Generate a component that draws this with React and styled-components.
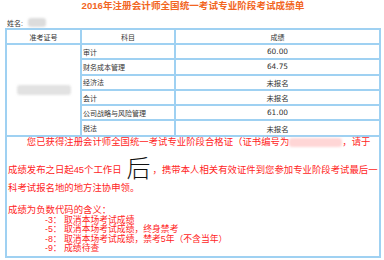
import React from "react";
import styled, { createGlobalStyle } from "styled-components";

const GlobalStyle = createGlobalStyle`
  body {
    margin: 0;
    background: #fff;
    font-family: "Liberation Sans", "Noto Sans CJK SC", sans-serif;
  }
`;

const Page = styled.div`
  width: 384px;
  height: 260px;
  overflow: hidden;
`;

const Title = styled.div`
  text-align: center;
  font-size: 9.6px;
  font-weight: 700;
  line-height: 11px;
  color: #f26522;
  padding-left: 2px;
`;

const NameRow = styled.div`
  display: flex;
  align-items: center;
  gap: 5px;
  height: 11px;
  margin-top: 6px;
  padding-left: 7px;
  font-size: 7px;
  color: #333;
`;

const Blur = styled.span`
  display: inline-block;
  width: ${(p) => p.$w}px;
  height: ${(p) => p.$h}px;
  background: ${(p) => p.$color || "#dcdcdc"};
  border-radius: 3px;
  filter: blur(1.2px);
  vertical-align: middle;
`;

const Grid = styled.div`
  margin-left: 5px;
  width: 376px;
  box-sizing: border-box;
  display: grid;
  grid-template-columns: 73px 92px 1fr;
  grid-template-rows: 13px repeat(6, 13.3px) 119px;
  gap: 2px;
  padding: 2px;
  background: #9fd1f2;
`;

const Cell = styled.div`
  background: #fff;
  display: flex;
  align-items: center;
  justify-content: ${(p) => p.$align || "flex-start"};
  padding: 0 1px;
  font-size: 7px;
  color: #333;
  white-space: nowrap;
  ${(p) => p.$span && `grid-row: span ${p.$span};`}
`;

const Score = styled(Cell)`
  font-family: "DejaVu Sans", "Noto Sans CJK SC", sans-serif;
  font-size: 7.4px;
`;

const Message = styled.div`
  grid-column: 1 / -1;
  background: #fff;
  padding: 0 1px;
  color: #ff2424;
  font-size: 9.4px;
  white-space: nowrap;
`;

const Line = styled.div`
  line-height: 10px;
  text-indent: ${(p) => (p.$indent ? "2em" : "0")};
  padding-top: ${(p) => p.$top || 0}px;
  padding-bottom: ${(p) => p.$bottom || 0}px;
`;

const Big = styled.span`
  font-size: 24px;
  line-height: 10px;
  color: #111;
  font-weight: 300;
  vertical-align: -4px;
  margin: 0 2px 0 5px;
`;

const Codes = styled.div`
  margin-top: 1px;
  padding-left: 37px;
  font-size: 8.8px;
  line-height: 9.4px;
`;

const subjects = [
  { name: "审计", score: "60.00" },
  { name: "财务成本管理", score: "64.75" },
  { name: "经济法", score: "未报名" },
  { name: "会计", score: "未报名" },
  { name: "公司战略与风险管理", score: "61.00" },
  { name: "税法", score: "未报名" },
];

const codes = [
  "-3： 取消本场考试成绩",
  "-5： 取消本场考试成绩，终身禁考",
  "-8： 取消本场考试成绩，禁考5年（不含当年）",
  "-9： 成绩待查",
];

const App = () => {
  return (
    <Page>
      <GlobalStyle />
      <Title>2016年注册会计师全国统一考试专业阶段考试成绩单</Title>
      <NameRow>
        <span>姓名:</span>
        <Blur $w={18} $h={9} />
      </NameRow>
      <Grid>
        <Cell $align="center">准考证号</Cell>
        <Cell $align="center">科目</Cell>
        <Cell $align="center">成绩</Cell>
        {subjects.map((s, i) => (
          <React.Fragment key={s.name}>
            {i === 0 && (
              <Cell $align="center" $span={6}>
                <Blur $w={54} $h={10} $color="#e2e2e2" />
              </Cell>
            )}
            <Cell>{s.name}</Cell>
            <Score $align="center">{s.score}</Score>
          </React.Fragment>
        ))}
        <Message>
          <Line $indent>
            您已获得注册会计师全国统一考试专业阶段合格证（证书编号为
            <Blur $w={53} $h={9} $color="#ffd6d6" />
            ，请于
          </Line>
          <Line $top={17} $bottom={8}>
            成绩发布之日起45个工作日<Big>后</Big>，携带本人相关有效证件到您参加专业阶段考试最后一
          </Line>
          <Line>科考试报名地的地方注协申领。</Line>
          <Line $top={12.2}>成绩为负数代码的含义：</Line>
          <Codes>
            {codes.map((c) => (
              <div key={c}>{c}</div>
            ))}
          </Codes>
        </Message>
      </Grid>
    </Page>
  );
};

export default App;
